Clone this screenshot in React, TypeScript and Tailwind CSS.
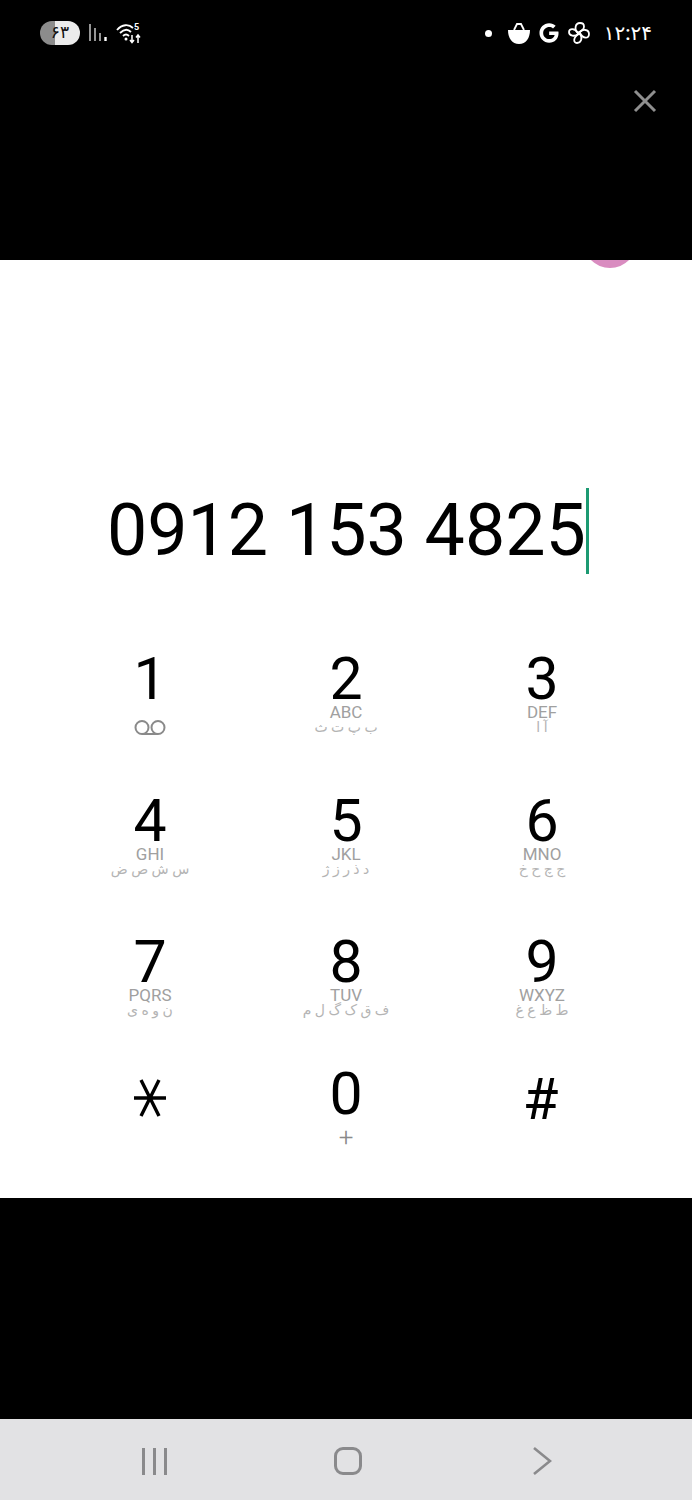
import { FaGoogle } from 'react-icons/fa'

const FONT = "font-['Roboto','DejaVu_Sans',sans-serif]"

interface DialKey {
  digit: string
  latin?: string
  arabic?: string
}

const ROWS: DialKey[][] = [
  [
    { digit: '1' },
    { digit: '2', latin: 'ABC', arabic: 'ب پ ت ث' },
    { digit: '3', latin: 'DEF', arabic: 'آ ا' },
  ],
  [
    { digit: '4', latin: 'GHI', arabic: 'س ش ص ض' },
    { digit: '5', latin: 'JKL', arabic: 'د ذ ر ز ژ' },
    { digit: '6', latin: 'MNO', arabic: 'ج چ ح خ' },
  ],
  [
    { digit: '7', latin: 'PQRS', arabic: 'ن و ه ی' },
    { digit: '8', latin: 'TUV', arabic: 'ف ق ک گ ل م' },
    { digit: '9', latin: 'WXYZ', arabic: 'ط ظ ع غ' },
  ],
]

export default function App() {
  return (
    <div className={`flex h-[1500px] w-[692px] flex-col overflow-hidden bg-black ${FONT}`}>
      {/* ── Top black area ── */}
      <div className="flex h-[260px] shrink-0 flex-col">
        <StatusBar />
        <div className="flex justify-end pr-[35px] pt-[44px]">
          <svg width="24" height="24" viewBox="0 0 24 24" className="text-[#8f8f8f]">
            <path d="M2 2 L22 22 M22 2 L2 22" stroke="currentColor" strokeWidth="3" />
          </svg>
        </div>
      </div>

      {/* ── Dialer ── */}
      <main className="relative flex h-[938px] shrink-0 flex-col bg-white">
        <div className="absolute left-[583px] top-0 h-[8px] w-[54px] overflow-hidden">
          <div className="absolute bottom-0 left-0 h-[54px] w-[54px] rounded-full bg-[#d98cc0]" />
        </div>

        <div className="flex h-[314px] items-end pl-[107px]">
          <span className="text-[71.7px] leading-[86px] text-black">0912 153 4825</span>
          <span className="h-[86px] w-[3px] bg-[#1c9a72]" />
        </div>

        <div className="grid grid-rows-[141.5px_141.5px_131.5px_auto] pl-[52px] pt-[75px]">
          {ROWS.map((row) => (
            <div key={row[0].digit} className="flex">
              {row.map((key) => (
                <Key key={key.digit} {...key} />
              ))}
            </div>
          ))}
          <div className="flex">
            <div className="flex w-[196px] justify-center pt-[14px]">
              <svg width="34" height="40" viewBox="0 0 34 40" className="text-black">
                <path d="M1 20 H33 M8 2 L26 38 M26 2 L8 38" stroke="currentColor" strokeWidth="3.4" />
              </svg>
            </div>
            <div className="flex w-[196px] flex-col items-center">
              <span className="h-[59px] text-[59px] leading-[59px] text-black">0</span>
              <span className="mt-[1px] text-[26px] font-light leading-[26px] text-[#8a8a8a]">+</span>
            </div>
            <div className="flex w-[193px] justify-center pt-[6px]">
              <span className="text-[58px] leading-[59px] text-black">#</span>
            </div>
          </div>
        </div>
      </main>

      <div className="h-[221px] shrink-0" />

      {/* ── Nav bar ── */}
      <nav className="flex h-[81px] shrink-0 items-center bg-[#e2e2e4] pl-[142px] pt-[3px]">
        <div className="flex w-[25px] justify-between">
          <span className="h-[27px] w-[3px] bg-[#8a8a8c]" />
          <span className="h-[27px] w-[3px] bg-[#8a8a8c]" />
          <span className="h-[27px] w-[3px] bg-[#8a8a8c]" />
        </div>
        <div className="ml-[167px] h-[28px] w-[28px] rounded-[9px] border-[3px] border-[#8a8a8c]" />
        <svg width="20" height="30" viewBox="0 0 20 30" className="ml-[170px] text-[#8a8a8c]">
          <path d="M2 2 L18 15 L2 28" fill="none" stroke="currentColor" strokeWidth="2.6" />
        </svg>
      </nav>
    </div>
  )
}

function Key({ digit, latin, arabic }: DialKey) {
  return (
    <div className="flex w-[196px] flex-col items-center">
      <span className="h-[59px] text-[59px] leading-[59px] text-black">{digit}</span>
      {latin ? (
        <>
          <span className="-mt-[4px] text-[17px] leading-[17px] text-[#a0a0a0]">{latin}</span>
          <span dir="rtl" className="-mt-[2px] text-[14px] leading-[17px] text-[#b4b4b4]">
            {arabic}
          </span>
        </>
      ) : (
        <svg width="32" height="17" viewBox="0 0 32 17" className="mt-[11px] text-[#8a8a8a]">
          <circle cx="8" cy="8.5" r="6.5" fill="none" stroke="currentColor" strokeWidth="2" />
          <circle cx="24" cy="8.5" r="6.5" fill="none" stroke="currentColor" strokeWidth="2" />
          <path d="M8 15 H24" stroke="currentColor" strokeWidth="2" />
        </svg>
      )}
    </div>
  )
}

function StatusBar() {
  return (
    <div className="flex items-center justify-between pl-[40px] pr-[40px] pt-[21px]">
      <div className="flex items-center gap-[8px]">
        <div className="flex h-[24px] w-[40px] items-center justify-center rounded-full bg-[linear-gradient(90deg,#8c8c8c_0,#8c8c8c_38%,#ececec_38%,#ececec_100%)] text-[17px] font-medium tracking-[1px] text-[#111]">
          ۶۳
        </div>
        <svg width="20" height="18" viewBox="0 0 20 18" className="text-[#bbb]">
          <path d="M2 0 V17 M7 4 V17 M12 9 V17" stroke="currentColor" strokeWidth="1.6" />
          <path d="M17.5 13 V17" stroke="#fff" strokeWidth="2.4" />
        </svg>
        <svg width="26" height="22" viewBox="0 0 26 22" className="text-white">
          <path d="M1 8 C6 2 13 2 17 6 M4 11 C8 7 12 7 15 10 M7 14 C9 12 11 12 13 14" fill="none" stroke="currentColor" strokeWidth="1.8" />
          <circle cx="10" cy="17" r="1.5" fill="currentColor" />
          <path d="M16 13 V20 M14 18 L16 20.5 L18 18 M22 21 V13 M20 15.5 L22 13 L24 15.5" fill="none" stroke="currentColor" strokeWidth="1.5" />
          <text x="18" y="8" fontSize="9" fontWeight="700" fill="currentColor">5</text>
        </svg>
      </div>

      <div className="flex items-center">
        <span className="mr-[15px] h-[7px] w-[7px] rounded-full bg-white" />
        <svg width="24" height="24" viewBox="0 0 24 24" className="mr-[8px] text-white">
          <path d="M1 9 H23 C23 17 19 23 12 23 C5 23 1 17 1 9 Z" fill="currentColor" />
          <path d="M7 9 L10 3 H14 L17 9" fill="none" stroke="currentColor" strokeWidth="1.8" />
        </svg>
        <FaGoogle size={20} className="mr-[8px] text-white" />
        <svg width="24" height="24" viewBox="0 0 24 24" className="mr-[10px] text-white">
          <g fill="none" stroke="currentColor" strokeWidth="1.8">
            <path d="M11 12 C7 9 8 2 13 2 C18 2 19 8 12 11 Z" />
            <path d="M13 11 C15 8 22 8 22 13 C22 18 16 18 13 12 Z" />
            <path d="M13 13 C16 17 14 22 10 22 C6 22 6 16 12 13 Z" />
            <path d="M11 13 C8 16 2 15 2 11 C2 7 8 7 11 12 Z" />
          </g>
        </svg>
        <span className="w-[51px] text-right text-[20px] font-medium leading-[24px] text-white">۱۲:۲۴</span>
      </div>
    </div>
  )
}
